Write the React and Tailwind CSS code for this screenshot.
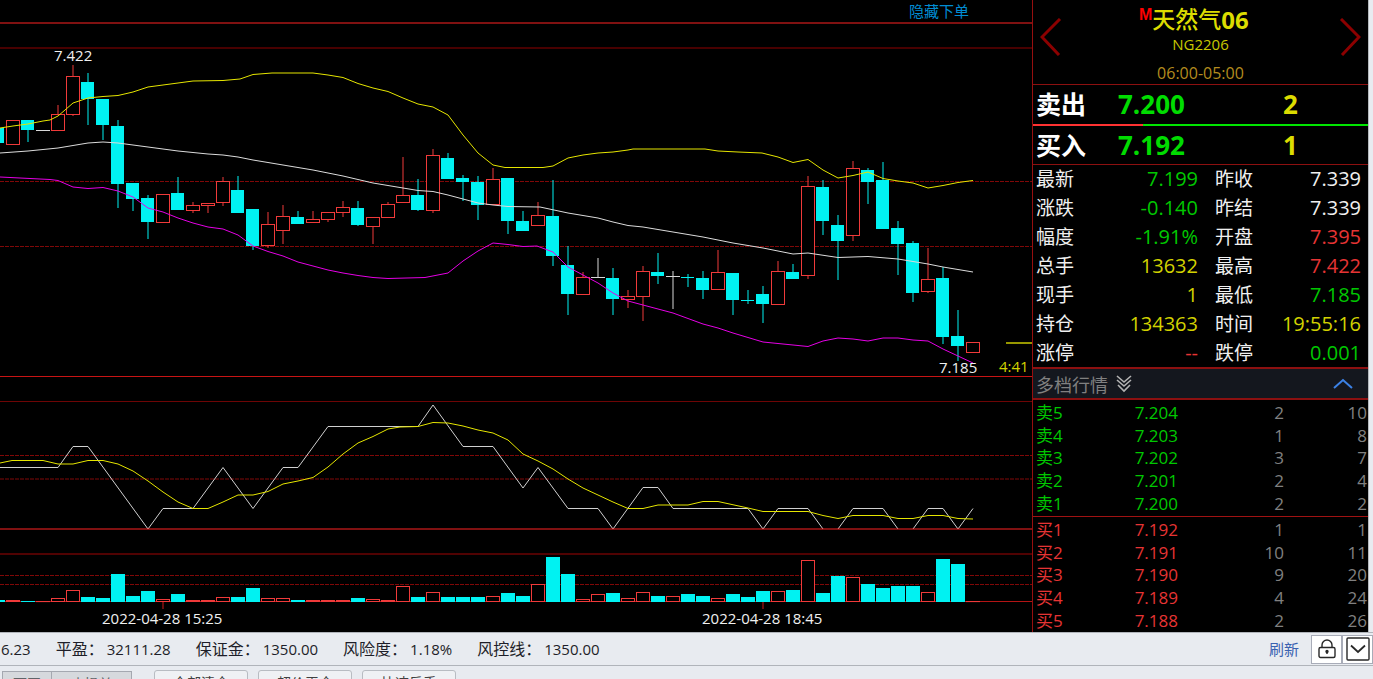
import React from "react";

const CYAN = "#00f2f2";
const RED = "#f03a3a";
const WHITE = "#d8d8d8";

/* kind, high, body top, body bottom, low, volume top */
const CANDLES = [
  ["c", 128, 128, 143, 143, 600],
  ["r", 120, 120, 144, 144, 600],
  ["c", 120, 120, 130, 142, 601],
  ["w", 130, 130, 130, 130, 601],
  ["r", 105, 114, 130, 130, 598],
  ["r", 65, 76, 114, 116, 590],
  ["c", 73, 82, 99, 125, 597],
  ["c", 99, 99, 125, 140, 598],
  ["c", 120, 126, 184, 208, 574],
  ["c", 183, 183, 199, 211, 596],
  ["c", 195, 198, 222, 239, 591],
  ["r", 194, 194, 222, 222, 599],
  ["c", 177, 193, 210, 210, 594],
  ["r", 202, 205, 210, 213, 600],
  ["r", 203, 203, 205, 213, 600],
  ["r", 177, 181, 202, 206, 597],
  ["c", 176, 190, 213, 213, 597],
  ["c", 209, 209, 246, 250, 588],
  ["r", 212, 224, 245, 248, 598],
  ["r", 205, 216, 230, 244, 598],
  ["c", 211, 217, 224, 224, 600],
  ["r", 211, 219, 222, 222, 600],
  ["r", 212, 212, 219, 222, 600],
  ["r", 201, 207, 212, 217, 600],
  ["c", 201, 208, 225, 226, 598],
  ["r", 217, 217, 226, 244, 599],
  ["r", 202, 204, 217, 217, 600],
  ["r", 157, 195, 202, 202, 586],
  ["c", 179, 195, 210, 211, 597],
  ["r", 149, 155, 210, 213, 592],
  ["c", 153, 158, 179, 179, 597],
  ["c", 175, 178, 182, 201, 597],
  ["c", 176, 182, 205, 220, 597],
  ["r", 168, 179, 204, 204, 596],
  ["c", 178, 178, 221, 234, 593],
  ["c", 211, 221, 231, 231, 596],
  ["r", 202, 215, 225, 225, 584],
  ["c", 180, 216, 256, 266, 557],
  ["c", 246, 265, 294, 315, 574],
  ["r", 272, 277, 294, 294, 599],
  ["w", 258, 277, 277, 277, 594],
  ["c", 268, 278, 299, 315, 593],
  ["r", 290, 296, 299, 308, 598],
  ["r", 266, 271, 296, 321, 592],
  ["c", 253, 272, 276, 284, 596],
  ["w", 271, 276, 276, 309, 596],
  ["c", 274, 277, 278, 287, 594],
  ["c", 271, 278, 290, 299, 596],
  ["r", 250, 272, 289, 289, 598],
  ["c", 273, 273, 300, 315, 594],
  ["c", 290, 300, 301, 304, 597],
  ["c", 286, 294, 304, 323, 591],
  ["r", 261, 271, 304, 304, 591],
  ["c", 264, 272, 279, 279, 590],
  ["r", 176, 186, 275, 279, 560],
  ["c", 180, 187, 221, 235, 593],
  ["c", 215, 225, 241, 280, 576],
  ["r", 161, 168, 235, 241, 577],
  ["c", 168, 170, 182, 204, 584],
  ["c", 162, 180, 229, 229, 588],
  ["c", 221, 228, 244, 275, 586],
  ["c", 241, 243, 293, 302, 586],
  ["r", 248, 279, 291, 293, 592],
  ["c", 267, 278, 337, 344, 559],
  ["c", 310, 336, 346, 361, 564],
  ["r", 342, 342, 352, 352, 601],
];

const UPPER = "0,128 13,126 28,124 43,121 50,120 58,116 65,110 73,103 88,98 103,96.5 118,95.5 133,92 148,87 163,85 178,83 193,81 223,80.5 240,79 253,74.5 272,73 313,73 328,75 343,77.5 358,83.5 373,88 388,91.5 403,98 418,104 433,107 448,115 463,135 478,153 493,165 505,167.5 543,167.5 553,166 568,158 583,155 598,153 613,152 628,150 633,149 705,149 718,151 738,152 762,153 778,157 793,162.5 808,159.5 823,170 838,178 853,175.5 868,172 883,178.5 898,181 913,183 928,188 943,185.5 958,182.5 973,180.5";
const MIDDLE = "0,153 28,151 58,148 88,143 103,142 118,143 133,145 148,147 178,151 208,154 223,155 238,157 253,160 283,165 313,170 343,176 373,183 403,188 418,190.5 433,191.5 448,195 463,199 478,203 493,205 508,206.5 540,207 568,213 598,218 613,222 628,225.5 643,227 673,232 703,237 733,243 763,248 793,254 808,253 838,257.5 868,256.5 898,259 928,264 943,267 973,272";
const LOWER = "0,177 20,178 50,179.5 58,180.5 73,187 88,188.5 103,187.5 118,191 133,197 148,208 163,212 178,218 193,223 208,227 223,229 238,235 253,246 268,251.5 283,256 298,262 313,266 328,270 343,273 358,275.5 373,277.5 388,278.5 425,277.5 448,273 463,261 478,251 493,243 508,244.5 523,246.5 537,246 553,252 568,267 583,275 598,283 613,293 628,301 643,305 673,313 703,324 718,328 733,333 763,342 783,344 808,346.5 823,341 838,338 853,339 868,341 883,338 898,338 913,340 928,341 943,349 958,356 973,363";
const SWING = "0,467.5 58,467.5 73,446.5 88,446.5 148,529 163,508.5 193,508.5 223,467.5 253,508.5 283,467.5 298,467.5 328,426.5 418,426.5 433,405 463,446.5 493,446.5 523,488 538,467.5 568,508.5 598,508.5 613,529 643,487.5 658,487.5 673,508.5 748,508.5 763,529 778,508.5 808,508.5 823,529";
const SWING_MID = "838,529 853,508.5 883,508.5 898,529";
const SWING_END = "913,529 928,508.5 943,508.5 958,529 973,508.5";
const SWING_AVG = "0,463 12,460.5 43,460.5 58,464 73,464 88,460.5 103,460.5 118,464 133,471 148,481 163,492 178,502 193,508.5 208,508.5 223,502 238,495 253,495 268,491.5 283,484 298,481 313,477.5 328,467 343,454 358,443 373,436.5 388,429 400,427 418,426.5 433,422.5 448,423 463,426 478,430 493,433 508,440 523,454 538,461 553,469 568,479 583,488 598,495 613,502 628,508.5 643,508.5 658,505 688,505 703,501.5 718,501.5 748,508 763,511.5 808,511.5 823,515.5 838,518.5 853,515.5 883,515.5 898,518.5 913,518.5 928,515.5 943,515.5 958,518.5 973,519";

const GRID = [
  [48, "#900000"],
  [376.5, "#c81414"],
  [401.5, "#6e0505"],
  [554, "#a00505"],
];
const DASHED = [181.5, 246.5, 455.5, 479, 575.5, 584.5];

function Line({ y, color, dash }) {
  return <line x1="0" x2="100%" y1={y} y2={y} stroke={color} strokeDasharray={dash} />;
}

function Candle({ row, x }) {
  const [kind, high, top, bottom, low, vol] = row;
  const color = kind === "c" ? CYAN : kind === "r" ? RED : WHITE;
  return (
    <g>
      {high < top && <line x1={x} x2={x} y1={high} y2={top} stroke={color} />}
      {low > bottom && <line x1={x} x2={x} y1={bottom} y2={low} stroke={color} />}
      {kind === "c" && <rect x={x - 7} y={top} width="13" height={bottom - top} fill={color} />}
      {kind === "r" && (
        <rect x={x - 6.5} y={top + 0.5} width="13" height={bottom - top} fill="#000" stroke={color} />
      )}
      {kind === "w" && <line x1={x - 7} x2={x + 7} y1={top + 0.5} y2={top + 0.5} stroke={color} />}
      {kind === "c" ? (
        <rect x={x - 7} y={vol} width="14" height={602 - vol} fill={CYAN} />
      ) : (
        <rect
          x={x - 6.5}
          y={vol + 0.5}
          width="13"
          height={Math.max(601 - vol, 0.1)}
          fill={vol >= 600 ? RED : "#000"}
          stroke={RED}
        />
      )}
    </g>
  );
}

function Chart() {
  return (
    <svg className="block h-[610px] w-full" role="img" aria-label="K线图">
      <g transform="translate(0 -22)" fill="none">
        <Line y={23} color="#ff2222" />
        {GRID.map(([y, c]) => <Line key={y} y={y} color={c} />)}
        {DASHED.map((y) => <Line key={y} y={y} color="#800808" dash="4 1" />)}
        <Line y={601.5} color="#b41414" />
        {CANDLES.map((row, i) => <Candle key={i} row={row} x={i * 15 - 2} />)}
        <polyline points={UPPER} stroke="#e6e600" />
        <polyline points={MIDDLE} stroke="#dcdcdc" />
        <polyline points={LOWER} stroke="#e600e6" />
        <polyline points={SWING} stroke="#d0d0d0" />
        <polyline points={SWING_MID} stroke="#d0d0d0" />
        <polyline points={SWING_END} stroke="#d0d0d0" />
        <polyline points={SWING_AVG} stroke="#e6e600" />
        <Line y={529} color="#ff2222" />
        <path d="M163 602V609M763 602V609" stroke="#d01818" />
        <path d="M1006 343H1032" stroke="#d8d800" strokeWidth="1.4" />
        <g className="text-[15px]" fill="#f0f0f0">
          <text x="54" y="61">7.422</text>
          <text x="939" y="373">7.185</text>
          <text x="102" y="624">2022-04-28 15:25</text>
          <text x="702" y="624">2022-04-28 18:45</text>
          <text x="999" y="372" fill="#d2d200">4:41</text>
        </g>
      </g>
    </svg>
  );
}

const G = "text-[#00c800]";
const R = "text-[#e63434]";
const Y = "text-[#d2d200]";
const W = "text-[#f0f0f0]";

const STATS = [
  ["最新", "7.199", G, "昨收", "7.339", W],
  ["涨跌", "-0.140", G, "昨结", "7.339", W],
  ["幅度", "-1.91%", G, "开盘", "7.395", R],
  ["总手", "13632", Y, "最高", "7.422", R],
  ["现手", "1", Y, "最低", "7.185", G],
  ["持仓", "134363", Y, "时间", "19:55:16", Y],
  ["涨停", "--", R, "跌停", "0.001", G],
];

const SELL = [
  ["卖5", "7.204", 2, 10],
  ["卖4", "7.203", 1, 8],
  ["卖3", "7.202", 3, 7],
  ["卖2", "7.201", 2, 4],
  ["卖1", "7.200", 2, 2],
];
const BUY = [
  ["买1", "7.192", 1, 1],
  ["买2", "7.191", 10, 11],
  ["买3", "7.190", 9, 20],
  ["买4", "7.189", 4, 24],
  ["买5", "7.188", 2, 26],
];

function Quote({ label, price, amount }) {
  return (
    <div className="flex items-center pl-[3px] font-bold leading-[38px]">
      <span className="w-[82px] text-[25px] text-white">{label}</span>
      <span className="flex-1 text-[26px] text-[#00dc00]">{price}</span>
      <span className="w-[85px] text-[26px] text-[#dcdc00]">{amount}</span>
    </div>
  );
}

function Ladder({ rows, tone }) {
  return (
    <table className="h-[113px] w-full table-fixed border-collapse text-[17px] leading-[22px]">
      <tbody>
        {rows.map(([name, price, lots, total]) => (
          <tr key={name}>
            <th scope="row" className={`w-[62px] p-0 pl-[3px] text-left font-normal ${tone}`}>{name}</th>
            <td className={`w-[83px] p-0 text-right ${tone}`}>{price}</td>
            <td className="w-[106px] p-0 text-right text-[#808080]">{lots}</td>
            <td className="p-0 pr-px text-right text-[#808080]">{total}</td>
          </tr>
        ))}
      </tbody>
    </table>
  );
}

function QuotePanel() {
  return (
    <aside className="w-[336px] shrink-0 border-l border-[#960f0f] bg-black">
      <header className="flex h-[85px] items-start justify-between border-b border-[#8c1010] px-[7px]">
        <button aria-label="上一个" className="mt-[18px]">
          <svg width="22" height="38" fill="none" stroke="#8c0000" strokeWidth="3">
            <path d="M20 1L2 19L19 37" />
          </svg>
        </button>
        <div className="flex flex-col items-center">
          <h1 className="relative flex h-[35px] items-center pt-1 text-[23px] font-medium leading-none text-[#dcdc00]">
            <span className="absolute right-full top-[7px] font-['Liberation_Sans',sans-serif] text-[16px] font-bold text-[#ff0000]">M</span>
            <span>天然气</span>
            <span className="text-[24px] font-bold">06</span>
          </h1>
          <p className="text-[15px] leading-[18px] text-[#c8c800]">NG2206</p>
          <p className="mt-[11px] text-[16px] leading-[18px] text-[#b48c1e]">06:00-05:00</p>
        </div>
        <button aria-label="下一个" className="mt-[18px]">
          <svg width="22" height="38" fill="none" stroke="#8c0000" strokeWidth="3">
            <path d="M2 1L20 19L3 37" />
          </svg>
        </button>
      </header>
      <Quote label="卖出" price="7.200" amount="2" />
      <div className="flex h-[3px] flex-col justify-end">
        <div className="flex h-0.5">
          <div className="w-[110px] bg-[#ff3232]" />
          <div className="flex-1 bg-[#00e600]" />
        </div>
      </div>
      <Quote label="买入" price="7.192" amount="1" />
      <div className="border-t border-[#8c1010]">
        <table className="h-[202px] w-full table-fixed border-collapse text-[19px] leading-[28px]">
          <tbody>
            {STATS.map(([a, av, ac, b, bv, bc]) => (
              <tr key={a}>
                <th scope="row" className="w-[62px] p-0 pl-[3px] text-left font-normal text-[#f0f0f0]">{a}</th>
                <td className={`w-[103px] p-0 text-right text-[20px] ${ac}`}>{av}</td>
                <th scope="row" className="w-[72px] p-0 pl-[17px] text-left font-normal text-[#f0f0f0]">{b}</th>
                <td className={`p-0 pr-[7px] text-right text-[20px] ${bc}`}>{bv}</td>
              </tr>
            ))}
          </tbody>
        </table>
      </div>
      <button className="flex h-[33px] w-full items-center border-y-2 border-[#8c1010] bg-[#14171e] pl-[3px] pr-[15px] text-[18px] text-[#808080]">
        <span className="pt-1">多档行情</span>
        <svg className="ml-2" width="16" height="18" fill="none" stroke="#b4b4b4" strokeWidth="1.6">
          <path d="M1 1L8 7L15 1M1 5L8 11L15 5M2 10L8 16L14 10" />
        </svg>
        <svg className="ml-auto" width="20" height="12" fill="none" stroke="#3c82e6" strokeWidth="2">
          <path d="M1 10L10 2L19 10" />
        </svg>
      </button>
      <div className="border-b border-[#a01212] pb-px pt-[2px]">
        <Ladder rows={SELL} tone="text-[#00c800]" />
      </div>
      <div className="pt-[2px]">
        <Ladder rows={BUY} tone="text-[#e63434]" />
      </div>
    </aside>
  );
}

const ACCOUNT = [
  ["平盈：", "32111.28"],
  ["保证金：", "1350.00"],
  ["风险度：", "1.18%"],
  ["风控线：", "1350.00"],
];

export default function App() {
  return (
    <div className="flex h-screen flex-col overflow-hidden bg-[#e8ebf0] font-['Open_Sans','Noto_Sans_CJK_SC',sans-serif]">
      <div className="flex h-[632px] shrink-0">
        <main className="min-w-0 flex-1 overflow-hidden bg-black">
          <div className="flex h-[22px] items-center justify-end pr-[63px]">
            <button className="text-[15px] leading-none text-[#008cd2]">隐藏下单</button>
          </div>
          <Chart />
        </main>
        <QuotePanel />
        <div className="w-[5px] shrink-0 border-l border-[#b4b8bc]" />
      </div>
      <footer className="shrink-0">
        <div className="flex h-[34px] items-center border-b border-t border-[#b0b4ba] text-[15px] text-[#1e1e28]">
          <div className="flex flex-1 items-center gap-[25px] pl-px">
            <span>6.23</span>
            {ACCOUNT.map(([k, v]) => (
              <span key={k} className="flex items-center gap-[3px]">
                <span className="text-[16px]">{k}</span>
                <span>{v}</span>
              </span>
            ))}
          </div>
          <a href="#refresh" className="mr-3 text-[#3a62b0]">刷新</a>
          <button aria-label="锁定" className="flex h-[29px] w-[31px] items-center justify-center border border-[#a8acb8] bg-white">
            <svg width="18" height="20" fill="none" stroke="#282828" strokeWidth="1.4">
              <rect x="1" y="8.5" width="16" height="10" rx="1.5" />
              <path d="M4 8.5V6a5 5 0 0 1 10 0V8.5M9 12V15" />
              <circle cx="9" cy="12.5" r="1" fill="#282828" />
            </svg>
          </button>
          <button aria-label="展开" className="flex h-[29px] w-[31px] items-center justify-center border border-[#a8acb8] bg-white">
            <svg width="24" height="24" fill="none" stroke="#282828" strokeWidth="1.4">
              <rect x="1" y="1" width="22" height="22" rx="1" />
              <path d="M5 8.5L12 15L19 8.5" strokeWidth="1.8" />
            </svg>
          </button>
        </div>
        <div className="flex items-start gap-[10px] pt-1 text-[14px] leading-[22px] text-[#404040]">
          <div className="mr-3 flex pl-[2px] pt-px text-[#606468]">
            <button className="h-[26px] w-[50px] border border-[#a4a8b0] bg-[#d6d9dd]">可开</button>
            <button className="h-[26px] w-[80px] border border-l-0 border-[#a4a8b0] bg-[#d6d9dd]">止损单</button>
          </div>
          {["全部清仓", "超价平仓", "快速反手"].map((t) => (
            <button key={t} className="h-[25px] w-[94px] rounded-[3px] border border-[#b8bcc2] bg-[#eff1f4]">{t}</button>
          ))}
        </div>
      </footer>
    </div>
  );
}
